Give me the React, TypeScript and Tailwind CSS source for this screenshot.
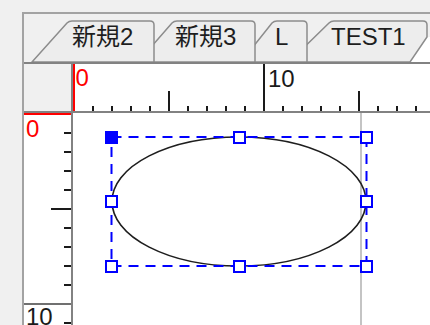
import React from "react";

const FONT = "font-['Liberation_Sans','Noto_Sans_CJK_JP',sans-serif]";
const UNIT = 19.05;
const pos = (k: number) => Math.round(0.5 + UNIT * k);

function Tabs() {
  const fill = "#ededed";
  const stroke = "#8c8c8c";
  return (
    <div className="relative h-[50px] shrink-0 border-b-2 border-[#828282]">
      <svg className="absolute inset-0" width="406" height="48">
        <polygon points="403,23 406,23 406,48 386,48" fill="#ffffff" />
        <path d="M265,48 L305,9 Q307,7 310,7 L399,7 Q403,7 403,11 L403,23 L386,48 Z" fill={fill} stroke={stroke} strokeWidth="1.5" />
        <path d="M217,48 L248,9 Q250,7 253,7 L279,7 Q283,7 283,11 L283,48 Z" fill={fill} stroke={stroke} strokeWidth="1.5" />
        <path d="M114,48 L148,9 Q150,7 153,7 L227,7 Q231,7 231,11 L231,48 Z" fill={fill} stroke={stroke} strokeWidth="1.5" />
        <path d="M8,48 L43,9 Q45,7 48,7 L126,7 Q130,7 130,11 L130,48 Z" fill={fill} stroke={stroke} strokeWidth="1.5" />
      </svg>
      <div className="relative flex items-baseline pt-[11px] pl-[48px] text-[24px] leading-[24px] text-[#1e1e1e]">
        <span className="w-[103px] shrink-0">新規2</span>
        <span className="w-[100px] shrink-0">新規3</span>
        <span className="w-[56px] shrink-0">L</span>
        <span className="shrink-0">TEST1</span>
      </div>
    </div>
  );
}

function TopRuler() {
  const ticks = [];
  for (let k = 1; k <= 18; k++) {
    const x = pos(k);
    const y1 = k === 10 ? 0 : k % 5 === 0 ? 27 : 42;
    ticks.push(<line key={k} x1={x} x2={x} y1={y1} y2={47} stroke="#1a1a1a" strokeWidth="2" />);
  }
  return (
    <svg width="357" height="47" className="block">
      <rect x="0" y="0" width="2" height="47" fill="#ff0000" />
      {ticks}
      <text x="2.5" y="22" fontSize="24" fill="#ff0000">0</text>
      <text x="195" y="23" fontSize="24" fill="#1a1a1a">10</text>
    </svg>
  );
}

function LeftRuler() {
  const ticks = [];
  for (let k = 1; k <= 11; k++) {
    const y = pos(k);
    if (k === 10) {
      ticks.push(<line key={k} x1={0} x2={47} y1={y} y2={y} stroke="#707070" strokeWidth="2" />);
    } else {
      const x1 = k % 5 === 0 ? 27 : 40;
      ticks.push(<line key={k} x1={x1} x2={47} y1={y} y2={y} stroke="#1a1a1a" strokeWidth="2" />);
    }
  }
  return (
    <svg width="47" height="212" className="block">
      <rect x="0" y="0" width="47" height="2" fill="#ff0000" />
      {ticks}
      <text x="2" y="23.5" fontSize="24" fill="#ff0000">0</text>
      <text x="2" y="212" fontSize="24" fill="#1a1a1a">10</text>
    </svg>
  );
}

function Canvas() {
  const L = 38.5, R = 293.5, T = 24, B = 153;
  const cx = (L + R) / 2, cy = (T + B) / 2;
  const handles = [
    [L, T], [cx, T], [R, T],
    [L, cy], [R, cy],
    [L, B], [cx, B], [R, B],
  ];
  return (
    <svg width="357" height="212" className="block">
      <line x1="288" x2="288" y1="0" y2="212" stroke="#c4c4c4" strokeWidth="2" />
      <ellipse cx={cx} cy={cy} rx={127} ry={64.5} fill="none" stroke="#1e1e1e" strokeWidth="1.6" />
      <rect x={L} y={T} width={R - L} height={B - T} fill="none" stroke="#0000ff" strokeWidth="2" strokeDasharray="10 7" />
      {handles.map(([hx, hy], i) => (
        <rect
          key={i}
          x={Math.round(hx - 5.5)}
          y={Math.round(hy - 5.5)}
          width="11"
          height="11"
          fill={i === 0 ? "#0000ff" : "#ffffff"}
          stroke="#0000ff"
          strokeWidth="2"
        />
      ))}
    </svg>
  );
}

export default function App() {
  return (
    <div className={`w-[430px] h-[325px] overflow-hidden bg-[#f0f0f0] pl-[22px] pt-[12px] ${FONT}`}>
      <div className="flex h-full flex-col border-l-2 border-t-2 border-[#a3a3a3]">
        <Tabs />
        <div className="flex h-[49px] shrink-0">
          <div className="h-full w-[49px] shrink-0 border-r-2 border-b-2 border-[#828282] bg-[#f0f0f0]" />
          <div className="h-full flex-1 border-b-2 border-[#828282] bg-white">
            <TopRuler />
          </div>
        </div>
        <div className="flex min-h-0 flex-1">
          <div className="w-[49px] shrink-0 border-r-2 border-[#828282] bg-white overflow-hidden">
            <LeftRuler />
          </div>
          <div className="flex-1 bg-white overflow-hidden">
            <Canvas />
          </div>
        </div>
      </div>
    </div>
  );
}
